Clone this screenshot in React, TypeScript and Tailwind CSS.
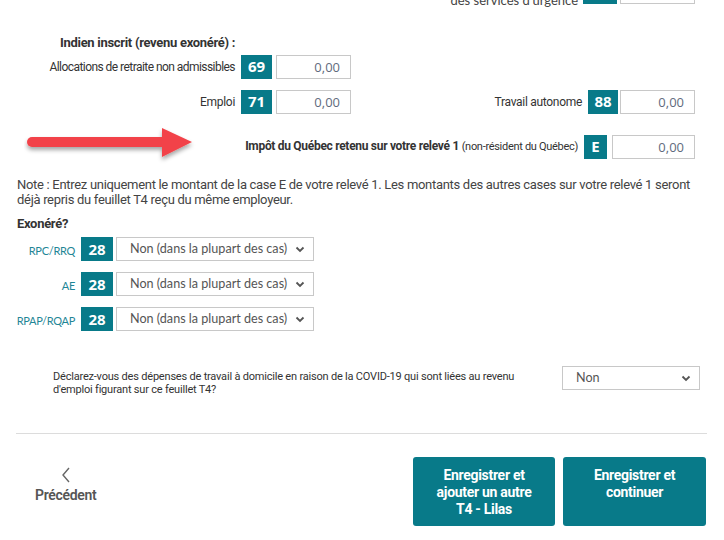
const teal = "bg-[#087a89]";
const narrow = "font-['Roboto',sans-serif] tracking-[-0.3px]";

const CodeBox = ({ code, w = "w-[31px]" }: { code: string; w?: string }) => (
  <div
    className={`${teal} ${w} h-[24px] flex items-center justify-center text-white font-bold text-[15px] font-['Open_Sans',sans-serif]`}
  >
    {code}
  </div>
);

const Amount = ({ w = "w-[75px]" }: { w?: string }) => (
  <input
    readOnly
    value="0,00"
    className={`${w} h-[24px] border border-[#c8c8c8] bg-white text-right pr-[10px] text-[13px] text-[#5f6b7d] font-['Open_Sans',sans-serif] outline-none`}
  />
);

const Chevron = ({ className }: { className?: string }) => (
  <svg width="10" height="7" viewBox="0 0 10 7" className={className}>
    <path d="M1.5 1.5 L5 5 L8.5 1.5" fill="none" stroke="#555" strokeWidth="1.8" />
  </svg>
);

const Select = ({ text, w }: { text: string; w: string }) => (
  <div
    className={`${w} h-[24px] border border-[#c8c8c8] bg-white flex items-center justify-between pl-[13px] pr-[8px] text-[12.6px] text-[#555] font-['Lato',sans-serif]`}
  >
    <span>{text}</span>
    <Chevron />
  </div>
);

const Arrow = () => (
  <svg width="176" height="40" viewBox="0 0 176 40" className="ml-[24px]">
    <defs>
      <filter id="sh" x="-10%" y="-30%" width="120%" height="180%">
        <feDropShadow dx="0" dy="3" stdDeviation="2" floodColor="#000" floodOpacity="0.35" />
      </filter>
    </defs>
    <g filter="url(#sh)">
      <path d="M8 10 H140 V20 H8 A5 5 0 0 1 8 10 Z" fill="#f2434a" />
      <path d="M138 1 L168 15 L138 30 Z" fill="#f2434a" />
    </g>
  </svg>
);

const exempt = ["RPC/RRQ", "AE", "RPAP/RQAP"];

export default function App() {
  return (
    <div className="w-[724px] h-[540px] overflow-hidden bg-white text-[#333]">
      {/* top cut-off row */}
      <div className="-mt-[20px] flex items-end justify-end pr-[29px] h-[24px]">
        <span className="text-[13px] leading-[16px] text-[#444] font-['Lato',sans-serif] mb-[-4px]">
          des services d'urgence
        </span>
        <div className="ml-[5px] mr-[3px]">
          <CodeBox code="" w="w-[34px]" />
        </div>
        <Amount />
      </div>

      {/* indien inscrit */}
      <div
        className={`mt-[29px] pl-[60px] text-[13px] font-bold font-['Roboto',sans-serif] tracking-[-0.3px]`}
      >
        Indien inscrit (revenu exonéré) :
      </div>
      <div className="mt-[2px] flex items-center h-[24px]">
        <span
          className={`w-[235px] text-right text-[12px] font-['Roboto',sans-serif] tracking-[-0.55px]`}
        >
          Allocations de retraite non admissibles
        </span>
        <div className="ml-[6px]">
          <CodeBox code="69" />
        </div>
        <div className="ml-[4px]">
          <Amount />
        </div>
      </div>
      <div className="mt-[11px] flex items-center h-[24px] pr-[29px]">
        <span className={`w-[235px] text-right text-[12px] ${narrow}`}>Emploi</span>
        <div className="ml-[6px]">
          <CodeBox code="71" />
        </div>
        <div className="ml-[4px]">
          <Amount />
        </div>
        <span className={`flex-1 text-right text-[12px] ${narrow}`}>Travail autonome</span>
        <div className="ml-[6px] mr-[2px]">
          <CodeBox code="88" w="w-[30px]" />
        </div>
        <Amount />
      </div>

      {/* impot du quebec */}
      <div className="mt-[16px] flex items-center pr-[29px] h-[34px]">
        <Arrow />
        <span className={`flex-1 text-right text-[12px] ${narrow}`}>
          <b>Impôt du Québec retenu sur votre relevé 1</b>{" "}
          <span className="text-[11px]">(non-résident du Québec)</span>
        </span>
        <div className="ml-[6px] mr-[5px]">
          <CodeBox code="E" w="w-[23px]" />
        </div>
        <Amount w="w-[83px]" />
      </div>

      <p className={`mt-[13px] px-[17px] text-[13px] leading-[15px] text-[#444] ${narrow}`}>
        Note : Entrez uniquement le montant de la case E de votre relevé 1. Les montants des autres
        cases sur votre relevé 1 seront déjà repris du feuillet T4 reçu du même employeur.
      </p>

      <div className={`mt-[7px] pl-[17px] text-[13px] font-bold ${narrow}`}>Exonéré?</div>

      <div className="mt-[4px] flex flex-col gap-[11px]">
        {exempt.map((label) => (
          <div key={label} className="flex items-center h-[24px]">
            <span className="w-[75px] text-right text-[11px] tracking-[-0.3px] text-[#1f8696] font-['Lato',sans-serif] pt-[4px]">
              {label}
            </span>
            <div className="ml-[6px]">
              <CodeBox code="28" w="w-[32px]" />
            </div>
            <div className="ml-[3px]">
              <Select text="Non (dans la plupart des cas)" w="w-[198px]" />
            </div>
          </div>
        ))}
      </div>

      {/* covid */}
      <div className="mt-[35px] flex items-start pr-[24px]">
        <p
          className={`ml-[53px] mt-[4px] w-[480px] text-[11px] leading-[13px] font-['Roboto',sans-serif] tracking-[-0.2px]`}
        >
          Déclarez-vous des dépenses de travail à domicile en raison de la COVID-19 qui sont liées au
          revenu d'emploi figurant sur ce feuillet T4?
        </p>
        <div className="ml-auto">
          <Select text="Non" w="w-[138px]" />
        </div>
      </div>

      <div className="mt-[37px] ml-[16px] mr-[17px] border-t border-[#dcdcdc]" />

      {/* footer */}
      <div className="mt-[23px] flex items-start pr-[18px]">
        <div className="ml-[35px] mt-[10px] flex flex-col items-center text-[#555]">
          <svg width="10" height="16" viewBox="0 0 10 16">
            <path d="M8 1 L2 8 L8 15" fill="none" stroke="#666" strokeWidth="1.4" />
          </svg>
          <span className={`mt-[2px] text-[14px] font-semibold ${narrow}`}>Précédent</span>
        </div>
        <div className="ml-auto flex gap-[8px]">
          <button
            className={`${teal} w-[142px] h-[69px] rounded-[3px] pt-[10px] text-white font-bold text-[14px] leading-[17px] ${narrow} flex flex-col items-center justify-start`}
          >
            Enregistrer et
            <br />
            ajouter un autre
            <br />
            T4 - Lilas
          </button>
          <button
            className={`${teal} w-[143px] h-[69px] rounded-[3px] pt-[10px] text-white font-bold text-[14px] leading-[17px] ${narrow} flex flex-col items-center justify-start`}
          >
            Enregistrer et
            <br />
            continuer
          </button>
        </div>
      </div>
    </div>
  );
}
